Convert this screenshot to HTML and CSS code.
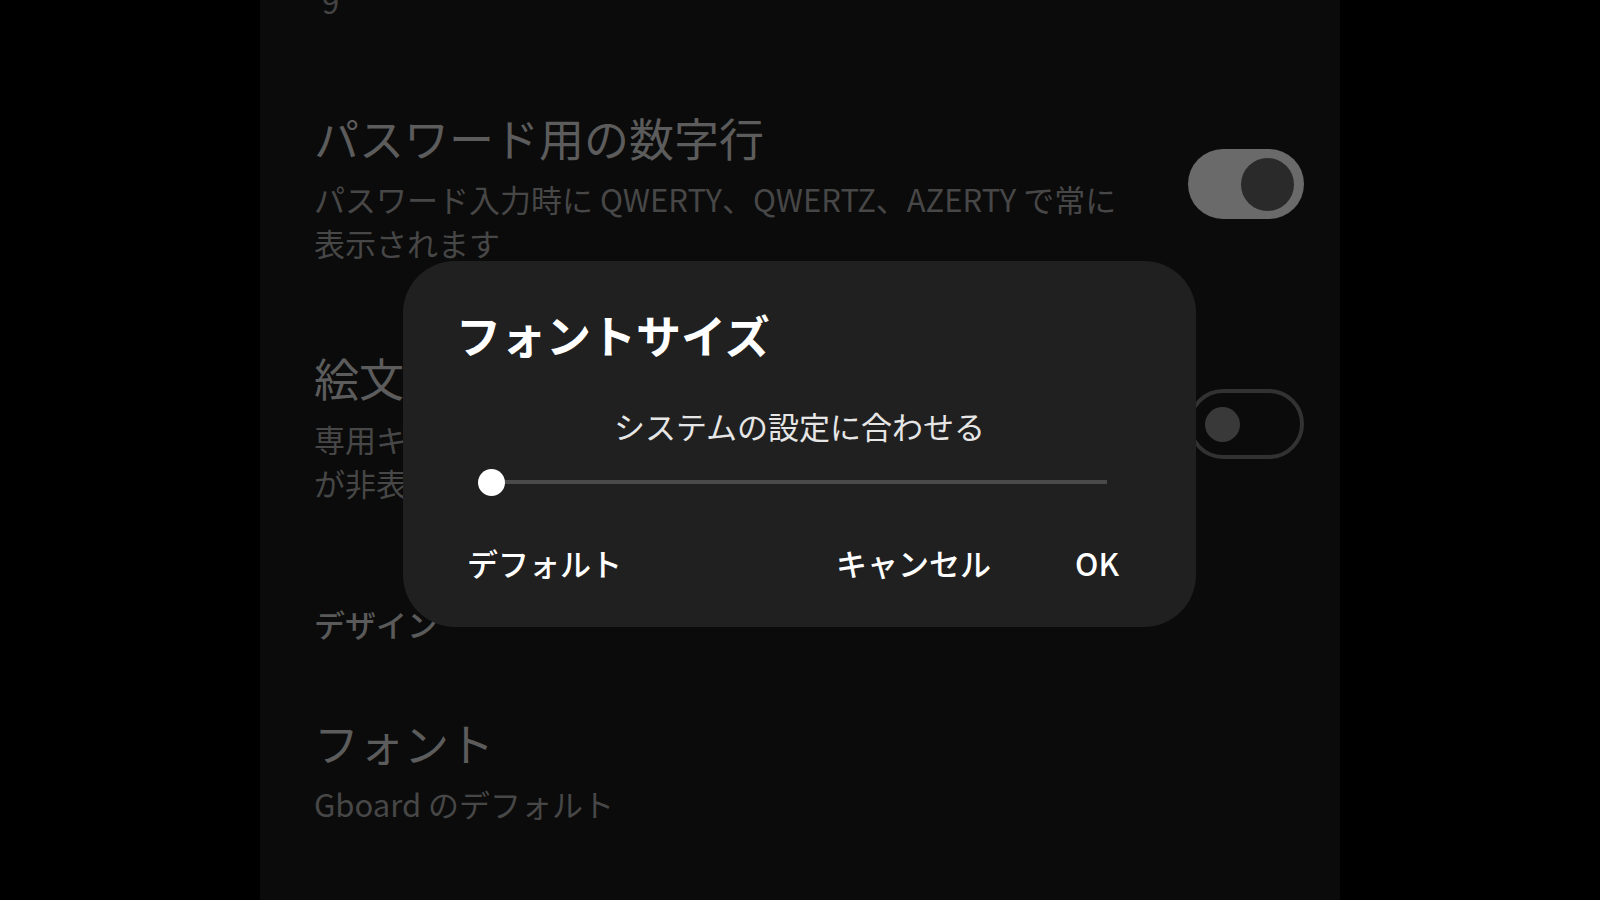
FILE: index.html
```html
<!DOCTYPE html>
<html lang="ja">
<head>
    <meta charset="UTF-8">
    <meta name="viewport" content="width=device-width, initial-scale=1.0">
    <title>フォントサイズ</title>
    <link rel="stylesheet" href="styles.css">
</head>
<body>
    <div class="screen">
        <div class="list">
            <div class="tail">9</div>

            <div class="row">
                <div class="text">
                    <div class="title">パスワード用の数字行</div>
                    <div class="summary">パスワード入力時に QWERTY、QWERTZ、AZERTY で常に<br>表示されます</div>
                </div>
                <div class="switch on"><span class="knob"></span></div>
            </div>

            <div class="row">
                <div class="text">
                    <div class="title">絵文字切り替えキーを表示</div>
                    <div class="summary">専用キーを表示すると、言語切り替えキーなど一部のキー<br>が非表示になることがあります</div>
                </div>
                <div class="switch"><span class="knob"></span></div>
            </div>

            <div class="section">デザイン</div>

            <div class="row">
                <div class="text">
                    <div class="title">フォント</div>
                    <div class="summary">Gboard のデフォルト</div>
                </div>
            </div>
        </div>

        <div class="dialog">
            <h2>フォントサイズ</h2>
            <p class="label">システムの設定に合わせる</p>
            <div class="slider">
                <span class="thumb"></span>
                <span class="track"></span>
            </div>
            <div class="actions">
                <button class="btn reset">デフォルト</button>
                <button class="btn">キャンセル</button>
                <button class="btn">OK</button>
            </div>
        </div>
    </div>
</body>
</html>
```

FILE: styles.css
```css
body {
    margin: 0;
    background: #000;
    font-family: "Noto Sans CJK JP", "Noto Sans", sans-serif;
}

.screen {
    position: relative;
    width: 1080px;
    height: 900px;
    margin: 0 auto;
    overflow: hidden;
    background: #0b0b0b;
}

.list {
    margin-top: -21px;
    padding: 0 36px 0 54px;
}

.tail {
    font-size: 31px;
    line-height: 44px;
    height: 44px;
    padding-left: 8px;
    margin-bottom: 44px;
    color: #444;
}

.row {
    display: flex;
    align-items: center;
    padding: 43px 0 42px;
}

.text {
    flex: 1;
    min-width: 0;
}

.title {
    font-size: 45px;
    line-height: 56px;
    color: #5c5c5c;
    white-space: nowrap;
}

.summary {
    margin-top: 11px;
    font-size: 31px;
    line-height: 44px;
    color: #474747;
    white-space: nowrap;
}

.section {
    padding: 55px 0 26px;
    font-size: 31px;
    line-height: 44px;
    font-weight: 500;
    color: #5a5a5a;
}

.switch {
    flex: none;
    box-sizing: border-box;
    width: 116px;
    height: 70px;
    margin: 0 0 7px 40px;
    border-radius: 35px;
    border: 4px solid #323232;
    display: flex;
    align-items: center;
    padding-left: 13px;
}

.switch .knob {
    width: 35px;
    height: 35px;
    border-radius: 50%;
    background: #393939;
}

.switch.on {
    border: none;
    background: #6a6a6a;
    justify-content: flex-end;
    padding: 0 10px 0 0;
}

.switch.on .knob {
    width: 53px;
    height: 53px;
    background: #2a2a2a;
}

.dialog {
    position: absolute;
    left: 143px;
    top: 261px;
    width: 793px;
    box-sizing: border-box;
    padding: 46px 56px 42px;
    border-radius: 52px;
    background: #202020;
    color: #fff;
}

.dialog h2 {
    margin: 0 0 0 -3px;
    font-size: 45px;
    line-height: 56px;
    font-weight: 700;
}

.label {
    margin: 41px 0 0;
    text-align: center;
    font-size: 31px;
    line-height: 44px;
    color: #e6e6e6;
}

.slider {
    display: flex;
    align-items: center;
    height: 40px;
    margin: 14px 33px 0 19px;
}

.thumb {
    flex: none;
    width: 27px;
    height: 27px;
    border-radius: 50%;
    background: #fff;
}

.track {
    flex: 1;
    height: 4px;
    background: #4a4a4a;
}

.actions {
    display: flex;
    align-items: center;
    gap: 68px;
    margin-top: 39px;
    padding-right: 13px;
}

.btn {
    padding: 0 8px;
    border: none;
    background: none;
    color: #fff;
    font-family: inherit;
    font-size: 31px;
    line-height: 44px;
    font-weight: 500;
    cursor: pointer;
}

.btn.reset {
    margin-right: auto;
}
```
